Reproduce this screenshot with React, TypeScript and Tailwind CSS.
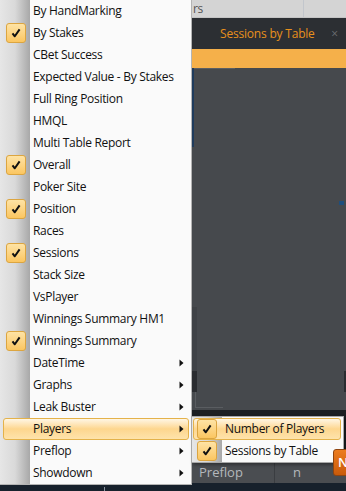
import React from "react";

type Item = { label: string; checked?: boolean; sub?: boolean; active?: boolean };

const items: Item[] = [
  { label: "By HandMarking" },
  { label: "By Stakes", checked: true },
  { label: "CBet Success" },
  { label: "Expected Value - By Stakes" },
  { label: "Full Ring Position" },
  { label: "HMQL" },
  { label: "Multi Table Report" },
  { label: "Overall", checked: true },
  { label: "Poker Site" },
  { label: "Position", checked: true },
  { label: "Races" },
  { label: "Sessions", checked: true },
  { label: "Stack Size" },
  { label: "VsPlayer" },
  { label: "Winnings Summary HM1" },
  { label: "Winnings Summary", checked: true },
  { label: "DateTime", sub: true },
  { label: "Graphs", sub: true },
  { label: "Leak Buster", sub: true },
  { label: "Players", sub: true, active: true },
  { label: "Preflop", sub: true },
  { label: "Showdown", sub: true },
];

const font = { fontFamily: '"Segoe UI", "Open Sans", "Noto Sans", sans-serif' };

const Check = () => (
  <div className="w-[20px] h-[20px] rounded-[3px] border border-[#dca540] bg-gradient-to-b from-[#fee3a4] to-[#fbc660] flex items-center justify-center">
    <svg width="12" height="12" viewBox="0 0 12 12">
      <path d="M2.5 6.3 L4.8 9.3 L9.6 2.4" fill="none" stroke="#111" strokeWidth="2" strokeLinejoin="round" />
    </svg>
  </div>
);

const Arrow = () => (
  <svg width="5" height="8" viewBox="0 0 5 8" className="absolute right-[7px] top-[7px]">
    <path d="M0.5 0.5 L4.5 4 L0.5 7.5 Z" fill="#111" />
  </svg>
);

const Row = ({ item }: { item: Item }) => (
  <div className="relative h-[22px] flex items-center">
    {item.active && (
      <div className="absolute left-[3px] right-[2px] top-0 bottom-0 rounded-[3px] border border-[#e4b24a] bg-gradient-to-b from-[#fff6e4] via-[#fdd68e] to-[#fee3ab]" />
    )}
    <div className="relative w-[33px] flex justify-start pl-[6px]">{item.checked && <Check />}</div>
    <span className="relative text-[12px] text-[#111] tracking-[-0.3px] leading-none">{item.label}</span>
    {item.sub && <Arrow />}
  </div>
);

export default function App() {
  return (
    <div className="w-[346px] h-[491px] overflow-hidden relative flex bg-[#17212c]" style={font}>
      {/* context menu */}
      <div className="w-[192px] h-[485px] shrink-0 relative bg-[#fafafa] border-r border-b border-[#b4b4b4]">
        <div className="absolute left-0 top-0 bottom-0 w-[30px] bg-gradient-to-r from-[#e6e6e6] via-[#d9d9d9] to-[#a8a8a8]" />
        <div className="relative flex flex-col">
          {items.map((it) => (
            <Row key={it.label} item={it} />
          ))}
        </div>
      </div>

      {/* app behind */}
      <div className="flex-1 h-[491px] flex flex-col">
        <div className="h-[18px] shrink-0 bg-[#d4d4d4] relative flex items-center border-b border-[#c4c4c4]">
          <span className="text-[12px] text-[#555] pl-[1px] tracking-[-0.3px]">rs</span>
          <div className="absolute left-[111px] top-0 bottom-0 w-px bg-[#c2c6cc]" />
        </div>
        <div className="h-[31px] shrink-0 bg-[#2c2f33] flex items-center pl-[28px]">
          <span className="text-[12px] text-[#e8901c] tracking-[-0.2px]">Sessions by Table</span>
          <span className="ml-auto mr-[8px] text-[12px] text-[#6b6e72]">×</span>
        </div>
        <div className="h-[19px] shrink-0 bg-[#f5b04a]" />
        <div className="flex-1 bg-[#46494d] relative">
          <div className="absolute left-0 top-0 w-[43px] h-px bg-[#5b5e62]" />
          <div className="absolute left-0 top-0 w-[2px] h-[79px] bg-[#1f3b5c]" />
          <div className="absolute left-[147px] top-[133px] w-[5px] h-[4px] bg-[#1f4e7c]" />
          <div className="absolute left-0 top-[239px] w-[5px] h-[64px] bg-[#3f4246]" />
          <div className="absolute left-0 top-[303px] w-[5px] h-[21px] bg-[#2a2c30]" />
          <div className="absolute right-0 top-[303px] w-[2px] h-[21px] bg-[#2a2c30]" />
          <div className="absolute left-[3px] top-[324px] w-[28px] h-[16px] border-l border-b border-[#5a5d61]" />
        </div>
        <div className="h-[52px] shrink-0 bg-[#1c1f22]" />
        <div className="h-[21px] shrink-0 bg-[#4a4d51] flex items-center text-[13px] text-[#b4b8bc]">
          <span className="pl-[7px] w-[83px] border-r border-[#3a3d41] h-full flex items-center">Preflop</span>
          <span className="pl-[18px]">n</span>
        </div>
        <div className="h-[8px] shrink-0 relative">
          <div className="absolute left-[-88px] top-[4px] w-px h-[4px] bg-[#8a949e]" />
        </div>
      </div>

      {/* submenu */}
      <div className="absolute left-[191px] top-[416px] w-[153px] h-[47px] bg-[#fafafa] border border-[#a8a8a8] shadow-[2px_2px_3px_rgba(0,0,0,0.35)] flex flex-col">
        <div className="absolute left-0 top-0 bottom-0 w-[30px] bg-gradient-to-r from-[#e6e6e6] via-[#d9d9d9] to-[#a8a8a8]" />
        <div className="relative h-[22px] mt-[1px] flex items-center">
          <div className="absolute left-[1px] right-[2px] top-0 bottom-0 rounded-[3px] border border-[#e4b24a] bg-gradient-to-b from-[#fff6e4] via-[#fdd68e] to-[#fee3ab]" />
          <div className="relative w-[33px] pl-[5px]"><Check /></div>
          <span className="relative text-[12px] text-[#111] tracking-[-0.3px]">Number of Players</span>
        </div>
        <div className="relative h-[22px] flex items-center">
          <div className="relative w-[33px] pl-[5px]"><Check /></div>
          <span className="relative text-[12px] text-[#111] tracking-[-0.3px]">Sessions by Table</span>
        </div>
      </div>

      {/* orange button peeking from the right */}
      <div className="absolute left-[333px] top-[449px] w-[16px] h-[27px] rounded-[3px] bg-gradient-to-b from-[#ec7c1e] to-[#c95a0a] border border-[#8f4510] text-white text-[13px] font-semibold leading-none pl-[4px] pt-[6px]">N</div>
    </div>
  );
}
